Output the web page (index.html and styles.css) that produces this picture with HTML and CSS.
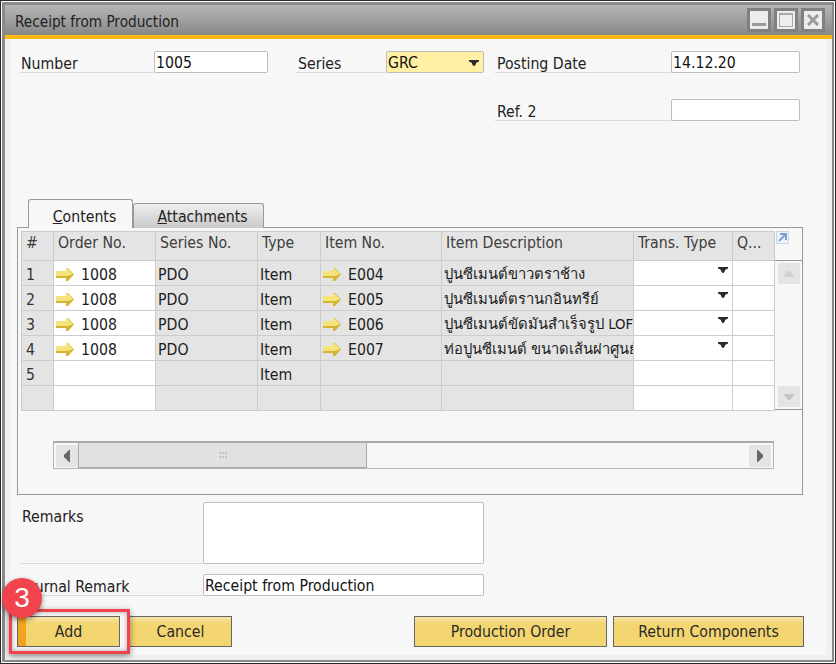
FILE: index.html
```html
<!DOCTYPE html>
<html lang="en">
<head>
<meta charset="utf-8">
<title>Receipt from Production</title>
<link rel="stylesheet" href="styles.css">
</head>
<body>
<svg class="defs" width="0" height="0" aria-hidden="true">
  <defs>
    <symbol id="arrow" viewBox="0 0 18 13">
      <path d="M0 3h10V0h2l6 6.500L12 13h-2v-3H0z" fill="#d6b431"/>
      <path d="M0 3h10V0h1l6 6-2 1-3 1H0z" fill="#f5e37c"/>
    </symbol>
    <symbol id="caret" viewBox="0 0 10 6">
      <path d="M0 0h10v1.500L7 3v1L5.500 6h-1L3 4V3L0 1.500z" fill="#2b2b2b"/>
    </symbol>
  </defs>
</svg>
<div class="shot">
  <div class="win">
    <header class="titlebar">
      <span class="title">Receipt from Production</span>
      <div class="winbtns">
        <span class="winbtn"><span class="glyph-min"></span></span>
        <span class="winbtn"><span class="glyph-max"></span></span>
        <span class="winbtn"><svg class="glyph-x" viewBox="0 0 12 12"><path d="M1 1l10 10M11 1L1 11" stroke="#9b9b9b" stroke-width="3"/></svg></span>
      </div>
    </header>
    <main class="content">
      <section class="form">
        <label class="lbl c1">Number</label><div class="inp c2">1005</div>
        <label class="lbl c4">Series</label><div class="inp sel c5">GRC<svg class="caret"><use href="#caret"/></svg></div>
        <label class="lbl c7">Posting Date</label><div class="inp c8">14.12.20</div>
        <label class="lbl c7 r2">Ref. 2</label><div class="inp c8 r2"></div>
      </section>

      <nav class="tabs">
        <div class="tab active"><u>C</u>ontents</div>
        <div class="tab"><u>A</u>ttachments</div>
      </nav>
      <section class="panel">
        <div class="gridwrap">
          <table class="grid">
            <colgroup>
              <col class="w1"><col class="w2"><col class="w3"><col class="w4"><col class="w5"><col class="w6"><col class="w7"><col class="w8">
            </colgroup>
            <thead>
              <tr><th>#</th><th>Order No.</th><th>Series No.</th><th>Type</th><th>Item No.</th><th>Item Description</th><th>Trans. Type</th><th>Q...</th></tr>
            </thead>
            <tbody>
              <tr><td class="idx">1</td><td class="wh"><svg class="arrow"><use href="#arrow"/></svg>1008</td><td>PDO</td><td>Item</td><td><svg class="arrow"><use href="#arrow"/></svg>E004</td><td><div class="clip">ปูนซีเมนต์ขาวตราช้าง</div></td><td class="wh rel"><svg class="caret"><use href="#caret"/></svg></td><td class="wh"></td></tr>
              <tr><td class="idx">2</td><td class="wh"><svg class="arrow"><use href="#arrow"/></svg>1008</td><td>PDO</td><td>Item</td><td><svg class="arrow"><use href="#arrow"/></svg>E005</td><td><div class="clip">ปูนซีเมนต์ตรานกอินทรีย์</div></td><td class="wh rel"><svg class="caret"><use href="#caret"/></svg></td><td class="wh"></td></tr>
              <tr><td class="idx">3</td><td class="wh"><svg class="arrow"><use href="#arrow"/></svg>1008</td><td>PDO</td><td>Item</td><td><svg class="arrow"><use href="#arrow"/></svg>E006</td><td><div class="clip">ปูนซีเมนต์ขัดมันสำเร็จรูป LOFT</div></td><td class="wh rel"><svg class="caret"><use href="#caret"/></svg></td><td class="wh"></td></tr>
              <tr><td class="idx">4</td><td class="wh"><svg class="arrow"><use href="#arrow"/></svg>1008</td><td>PDO</td><td>Item</td><td><svg class="arrow"><use href="#arrow"/></svg>E007</td><td><div class="clip">ท่อปูนซีเมนต์ ขนาดเส้นผ่าศูนย์กลาง</div></td><td class="wh rel"><svg class="caret"><use href="#caret"/></svg></td><td class="wh"></td></tr>
              <tr><td class="idx">5</td><td class="wh"></td><td></td><td>Item</td><td></td><td></td><td class="wh"></td><td class="wh"></td></tr>
              <tr><td class="idx"></td><td class="wh"></td><td></td><td></td><td></td><td></td><td class="wh"></td><td class="wh"></td></tr>
            </tbody>
          </table>
          <aside class="vscroll">
            <svg class="expand" viewBox="0 0 13 13"><rect x="0.500" y="0.500" width="12" height="12" fill="#eef3fa" stroke="#c5d5ea"/><path d="M4 3h6v6M9.500 3.500L3 10" fill="none" stroke="#7f9fce" stroke-width="2"/></svg>
            <div class="vtrack">
              <span class="vbtn"><svg viewBox="0 0 10 6"><path d="M4 0h2l4 5v1H0V5z" fill="#cfcfcf"/></svg></span>
              <span class="vbtn"><svg viewBox="0 0 10 6"><path d="M0 0h10v1L6 6H4L0 1z" fill="#c4c4c4"/></svg></span>
            </div>
          </aside>
        </div>
        <div class="hscroll">
          <span class="hbtn"><svg viewBox="0 0 6 12"><path d="M6 0v12H5L0 7V5l5-5z" fill="#666"/></svg></span>
          <div class="thumb"><svg class="grip" viewBox="0 0 8 6"><path d="M0 0h2v2H0zM3 0h2v2H3zM6 0h2v2H6zM0 4h2v2H0zM3 4h2v2H3zM6 4h2v2H6z" fill="#c4c4c4"/></svg></div>
          <span class="hbtn end"><svg viewBox="0 0 6 12"><path d="M0 0v12h1l5-5V5L1 0z" fill="#666"/></svg></span>
        </div>
      </section>

      <section class="remarks">
        <label class="lbl rm">Remarks</label><div class="inp area"></div>
        <label class="lbl">Journal Remark</label><div class="inp">Receipt from Production</div>
      </section>

      <footer class="actions">
        <button class="btn add">Add</button>
        <button class="btn">Cancel</button>
        <button class="btn prod">Production Order</button>
        <button class="btn ret">Return Components</button>
      </footer>
    </main>
  </div>
  <div class="highlight"></div>
  <div class="badge">3</div>
</div>
</body>
</html>
```
FILE: styles.css
```css
* { box-sizing: border-box; }
html, body { margin: 0; padding: 0; }
body { width: 836px; height: 664px; overflow: hidden; background: #fff; font-family: "DejaVu Sans Condensed", "DejaVu Sans", sans-serif; font-stretch: condensed; font-size: 15.700px; color: #1c1c1c; }
.defs { position: absolute; }

.shot { position: relative; width: 836px; height: 664px; border: 1px solid #2a2a2a; padding: 1px; background: #fff; }
.win { height: 100%; border: 2px solid #8a8a8a; border-width: 3px 2px 2px 3px; display: flex; flex-direction: column; background: #f0f0f0; }

.titlebar { flex: none; height: 34px; border-bottom: 4px solid #fdb913; background: linear-gradient(#b6b6b6, #888); display: flex; align-items: center; justify-content: space-between; padding: 0 7px 0 10px; }
.title { color: #222; font-size: 15.200px; margin-top: 3px; }
.winbtns { display: flex; gap: 3px; }
.winbtn { width: 24px; height: 24px; border: 3px solid #808080; background: #ededed; display: flex; align-items: center; justify-content: center; position: relative; }
.glyph-min { width: 14px; height: 3px; background: #9b9b9b; margin-top: 9px; }
.glyph-max { width: 14px; height: 14px; border: 1px solid #aaa; border-top-width: 2px; }
.glyph-x { width: 12px; height: 12px; }

.content { flex: 1; margin: 0 6px 5px 5px; background: #f7f7f7; display: flex; flex-direction: column; }

.form { display: grid; grid-template-columns: 134px 114px 28px 90px 98px 11px 176px 129px; grid-auto-rows: 22px; row-gap: 26px; padding: 12px 0 0 10px; }
.lbl { border-bottom: 1px solid #d6d9de; padding: 1px 0 0 1px; line-height: 23px; white-space: nowrap; color: #222; }
.inp { background: #fff; border: 1px solid #bdbdbd; border-radius: 2px; line-height: 22px; padding-left: 1px; height: 22px; white-space: nowrap; color: #111; }
.sel { background: #fff0a3; position: relative; }
.caret { width: 10px; height: 6px; position: absolute; right: 4px; top: 8px; }
.c1 { grid-column: 1; } .c2 { grid-column: 2; } .c4 { grid-column: 4; padding-left: 2px; } .c5 { grid-column: 5; } .c7 { grid-column: 7; padding-left: 2px; } .c8 { grid-column: 8; }
.r2 { grid-row: 2; }

.tabs { display: flex; align-items: flex-end; margin: 78px 0 0 18px; height: 29px; position: relative; z-index: 1; margin-bottom: -1px; }
.tab { width: 131px; height: 25px; padding: 1px 0 0 8px; text-align: center; line-height: 23px; border: 1px solid #999; border-bottom: 0; border-radius: 3px 3px 0 0; background: linear-gradient(#efefef, #c9c9c9); color: #222; }
.tab.active { width: 105px; height: 29px; background: #f7f7f7; line-height: 31px; }
.panel { width: 786px; height: 268px; margin-left: 7px; border: 1px solid #999; padding-top: 3px; }
.gridwrap { display: flex; height: 180px; padding-left: 3px; }
.grid { border-collapse: collapse; table-layout: fixed; width: 753px; height: 179px; }
.w1 { width: 32px; } .w2 { width: 102px; } .w3 { width: 102px; } .w4 { width: 63px; } .w5 { width: 121px; } .w6 { width: 192px; } .w7 { width: 99px; } .w8 { width: 42px; }
.grid th, .grid td { background: #e4e4e4; border: 1px solid #ccc; padding: 0 0 0 2px; text-align: left; font-weight: 400; overflow: hidden; white-space: nowrap; height: 25px; line-height: 24px; }
.grid td { padding-top: 3px; line-height: 21px; }
.grid th { height: 29px; vertical-align: top; padding: 0 0 0 4px; color: #3d3d3d; line-height: 21px; }
.grid td.idx { padding-left: 4px; color: #333; }
.grid td.wh { background: #fff; }
.rel { position: relative; }
.rel .caret { right: 4px; top: 6px; }
.clip { overflow: hidden; width: 189px; font-size: 14.800px; line-height: 22px; margin-top: -1px; font-family: "DejaVu Sans Condensed", "DejaVu Sans", "Noto Sans", sans-serif; }
.arrow { width: 18px; height: 13px; vertical-align: -1px; margin-right: 7px; }

.vscroll { position: relative; width: 27px; flex: none; }
.expand { position: absolute; left: 1px; top: 0; width: 13px; height: 13px; }
.vtrack { position: absolute; left: 0; right: 0; top: 29px; height: 150px; border-top: 1px solid #999; border-bottom: 1px solid #999; display: flex; flex-direction: column; justify-content: space-between; padding: 2px 3px; }
.vbtn { height: 21px; width: 22px; background: #e4e4e4; display: flex; align-items: center; justify-content: center; }
.vbtn svg { width: 10px; height: 6px; }

.hscroll { width: 721px; height: 28px; margin: 30px 0 0 35px; border: 1px solid #b5b5b5; border-top: 2px solid #aaa; display: flex; align-items: center; padding-left: 2px; padding-right: 2px; }
.hbtn { width: 22px; height: 22px; background: #e4e4e4; display: flex; align-items: center; justify-content: center; flex: none; }
.hbtn svg { width: 6px; height: 12px; }
.hbtn.end { margin-left: auto; }
.thumb { width: 289px; height: 25px; background: #e1e1e1; border-right: 1px solid #aaa; border-bottom: 1px solid #aaa; border-left: 1px solid #aaa; display: flex; align-items: center; justify-content: center; margin-right: 0; }
.grip { width: 8px; height: 6px; }

.remarks { display: grid; grid-template-columns: 182px 281px; grid-template-rows: 62px 22px; row-gap: 10px; margin: 7px 0 0 11px; }
.area { height: 62px; }
.rm { padding-top: 3px; }

.actions { display: flex; margin: 20px 0 0 7px; height: 31px; }
.btn { font: inherit; color: #2a2a2a; width: 103px; height: 31px; padding: 0; border: 1px solid #666; background: linear-gradient(#f6e6ad 0, #f3d671 22%, #f3d570 100%); }
.btn + .btn { margin-left: 9px; }
.btn.add { background: linear-gradient(#f7a820, #f0a020) left / 8px 100% no-repeat, linear-gradient(#f6e6ad 0, #f3d671 22%, #f3d570 100%); }
.btn.prod { width: 193px; margin-left: 182px; }
.btn.ret { width: 191px; margin-left: 6px; }

.highlight { position: absolute; left: 8px; top: 608px; width: 121px; height: 45px; border: 3px solid #f0434d; box-shadow: 0 2px 6px rgba(0,0,0,.45), inset 0 0 5px rgba(0,0,0,.3); }
.badge { position: absolute; left: 1px; top: 577px; width: 40px; height: 40px; border-radius: 50%; background: #f1444e; color: #fff; font-size: 28px; line-height: 40px; text-align: center; box-shadow: 0 2px 5px rgba(0,0,0,.45); font-family: "Liberation Sans", sans-serif; }
```
